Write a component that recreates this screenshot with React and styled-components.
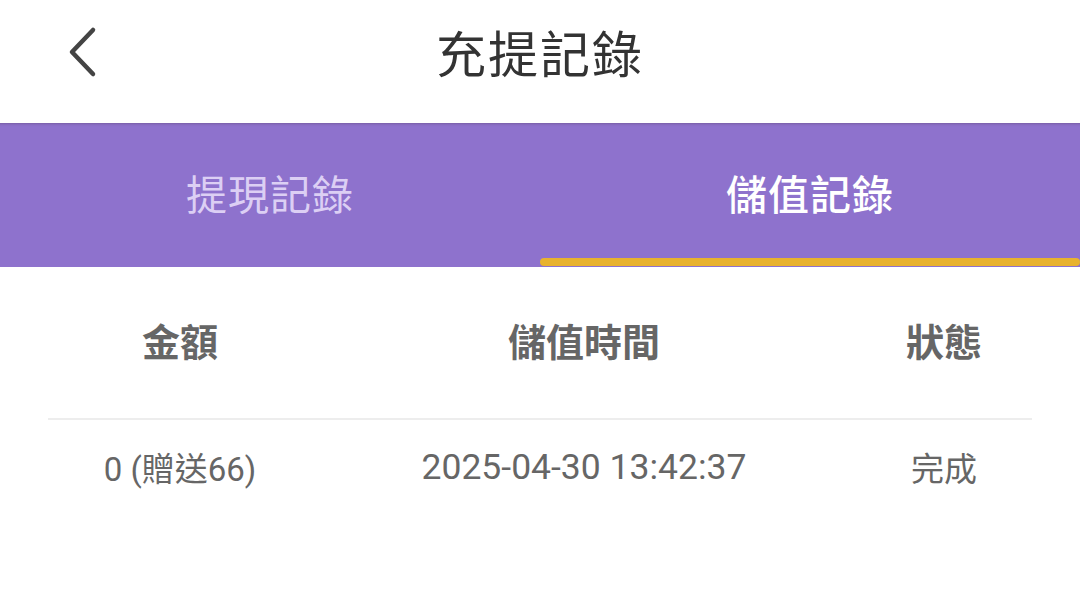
import React from "react";
import styled, { createGlobalStyle } from "styled-components";

const Global = createGlobalStyle`
  html, body { margin: 0; padding: 0; background: #fff; }
  body { font-family: Roboto, "Noto Sans CJK TC", sans-serif; }
`;

const Page = styled.div`
  width: 1080px;
  height: 603px;
  background: #fff;
  overflow: hidden;
`;

const Header = styled.header`
  height: 123px;
  display: flex;
  align-items: center;
  justify-content: center;
  position: relative;
`;

const Back = styled.button`
  position: absolute;
  left: 57px;
  top: 22px;
  width: 50px;
  height: 60px;
  border: 0;
  background: none;
  padding: 0;
  display: flex;
  align-items: center;
  justify-content: center;
`;

const Title = styled.h1`
  margin: 0;
  margin-top: -22px;
  font-family: "Noto Sans CJK TC", sans-serif;
  font-weight: 400;
  font-size: 50px;
  color: #333;
  letter-spacing: 2px;
`;

const TabBar = styled.nav`
  height: 144px;
  background: linear-gradient(
    to bottom,
    #7a5fa9 0px,
    #8a6ec5 2px,
    #8e72cd 4px,
    #8e72cd 100%
  );
  display: grid;
  grid-template-columns: 1fr 1fr;
`;

const Tab = styled.div`
  position: relative;
  display: flex;
  align-items: center;
  justify-content: center;
  font-family: "Noto Sans CJK TC", sans-serif;
  font-size: 41px;
  font-weight: ${(p) => (p.$active ? 500 : 400)};
  color: ${(p) => (p.$active ? "#ffffff" : "#dccff4")};
  padding-bottom: 7px;
  letter-spacing: 1px;
`;

const Indicator = styled.span`
  position: absolute;
  left: 0;
  right: 0;
  bottom: 1px;
  height: 8px;
  border-radius: 4px;
  background: #e8b22e;
`;

const Table = styled.section`
  margin: 0 48px;
`;

const Row = styled.div`
  display: grid;
  grid-template-columns: 264px 544px 176px;
  align-items: center;
  height: ${(p) => p.$h}px;
  border-bottom: ${(p) => (p.$line ? "2px solid #ededed" : "none")};
`;

const HeadCell = styled.div`
  text-align: center;
  font-family: "Noto Sans CJK TC", sans-serif;
  font-weight: 700;
  font-size: 38px;
  color: #666;
  padding-bottom: 6px;
`;

const Cell = styled.div`
  text-align: center;
  font-family: Roboto, "Noto Sans CJK TC", sans-serif;
  font-size: ${(p) => p.$size || 33}px;
  color: #666;
  padding-bottom: 5px;
`;

export default function App() {
  return (
    <Page>
      <Global />
      <Header>
        <Back aria-label="back">
          <svg width="40" height="58" viewBox="0 0 40 58">
            <path d="M31 7 L10 29 L31 51" fill="none" stroke="#444" strokeWidth="4.5" strokeLinecap="round" strokeLinejoin="round" />
          </svg>
        </Back>
        <Title>充提記錄</Title>
      </Header>
      <TabBar>
        <Tab>提現記錄</Tab>
        <Tab $active>
          儲值記錄
          <Indicator />
        </Tab>
      </TabBar>
      <Table>
        <Row $h={151} $line>
          <HeadCell>金額</HeadCell>
          <HeadCell>儲值時間</HeadCell>
          <HeadCell>狀態</HeadCell>
        </Row>
        <Row $h={98}>
          <Cell $size={33}>0 (贈送66)</Cell>
          <Cell $size={35.5}>2025-04-30 13:42:37</Cell>
          <Cell $size={33}>完成</Cell>
        </Row>
      </Table>
    </Page>
  );
}
